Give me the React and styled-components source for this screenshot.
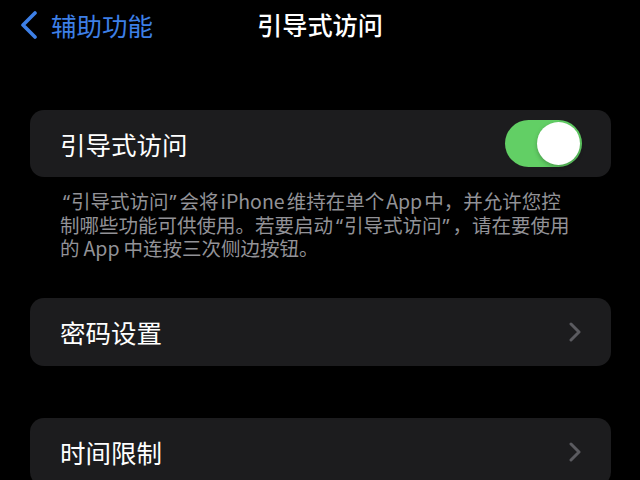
import React from "react";
import styled, { createGlobalStyle } from "styled-components";

const Global = createGlobalStyle`
  html, body { margin: 0; padding: 0; background: #000; }
  body {
    font-family: "Noto Sans CJK SC", "Noto Sans", sans-serif;
    color: #fff;
    -webkit-font-smoothing: antialiased;
  }
`;

const Page = styled.div`
  width: 640px;
  height: 480px;
  overflow: hidden;
  background: #000;
`;

const NavBar = styled.div`
  display: grid;
  grid-template-columns: 1fr auto 1fr;
  align-items: center;
  height: 50px;
  padding: 0 20px;
`;

const BackButton = styled.div`
  display: flex;
  align-items: center;
  gap: 13px;
  color: #3d7fe6;
  font-size: 25.5px;
  line-height: 1;
`;

const NavTitle = styled.div`
  font-size: 25.2px;
  font-weight: 500;
  color: #fff;
  line-height: 1;
`;

const Content = styled.div`
  display: flex;
  flex-direction: column;
  padding: 60px 29px 0 30px;
`;

const Card = styled.div`
  display: flex;
  align-items: center;
  justify-content: space-between;
  height: ${(p) => p.$h || 67}px;
  padding: 0 29px 0 30px;
  background: #1c1c1e;
  border-radius: 14px;
  margin-top: ${(p) => p.$mt || 0}px;
  flex-shrink: 0;
`;

const Label = styled.div`
  font-size: 25.5px;
  color: #fff;
  line-height: 1;
`;

const Footer = styled.div`
  margin: 12px 0 0;
  padding: 0 20px 0 30px;
  font-size: 19.5px;
  color: #929297;
  white-space: nowrap;
  display: flex;
  flex-direction: column;
`;

const FooterLine = styled.div`
  height: 23.5px;
  line-height: 23.5px;
`;

const Latin = styled.span`
  margin: 0 ${(p) => (p.$wide ? 4 : 2)}px;
`;

const Quote = styled.span`
  font-family: "Noto Sans", sans-serif;
  margin: ${(p) => (p.$open ? "0 1px 0 3px" : "0 3px 0 1px")};
`;

const Switch = styled.div`
  width: 77px;
  height: 47px;
  border-radius: 24px;
  background: #62cf65;
  display: flex;
  align-items: center;
  justify-content: flex-end;
  padding: 2px;
  box-sizing: border-box;
`;

const Knob = styled.div`
  width: 43px;
  height: 43px;
  border-radius: 50%;
  background: #fff;
  box-shadow: 0 2px 4px rgba(0, 0, 0, 0.25);
`;

const Chevron = () => (
  <svg width="14" height="20" viewBox="0 0 14 20">
    <path d="M3 2 L11 10 L3 18" fill="none" stroke="#5b5b60" strokeWidth="3" strokeLinecap="round" strokeLinejoin="round" />
  </svg>
);

const BackChevron = () => (
  <svg width="18" height="28" viewBox="0 0 18 28">
    <path d="M15 2 L3 14 L15 26" fill="none" stroke="#3d7fe6" strokeWidth="3.6" strokeLinecap="round" strokeLinejoin="round" />
  </svg>
);

export default function App() {
  return (
    <Page>
      <Global />
      <NavBar>
        <BackButton>
          <BackChevron />
          <span>辅助功能</span>
        </BackButton>
        <NavTitle>引导式访问</NavTitle>
        <div />
      </NavBar>
      <Content>
        <Card>
          <Label>引导式访问</Label>
          <Switch>
            <Knob />
          </Switch>
        </Card>
        <Footer>
          <FooterLine>
            <Quote $open>“</Quote>引导式访问<Quote>”</Quote>会将<Latin>iPhone</Latin>维持在单个<Latin>App</Latin>中，并允许您控
          </FooterLine>
          <FooterLine>
            制哪些功能可供使用。若要启动<Quote $open>“</Quote>引导式访问<Quote>”</Quote>，请在要使用
          </FooterLine>
          <FooterLine>
            的<Latin $wide>App</Latin>中连按三次侧边按钮。
          </FooterLine>
        </Footer>
        <Card $mt={38} $h={68}>
          <Label>密码设置</Label>
          <Chevron />
        </Card>
        <Card $mt={52} $h={68}>
          <Label>时间限制</Label>
          <Chevron />
        </Card>
      </Content>
    </Page>
  );
}
